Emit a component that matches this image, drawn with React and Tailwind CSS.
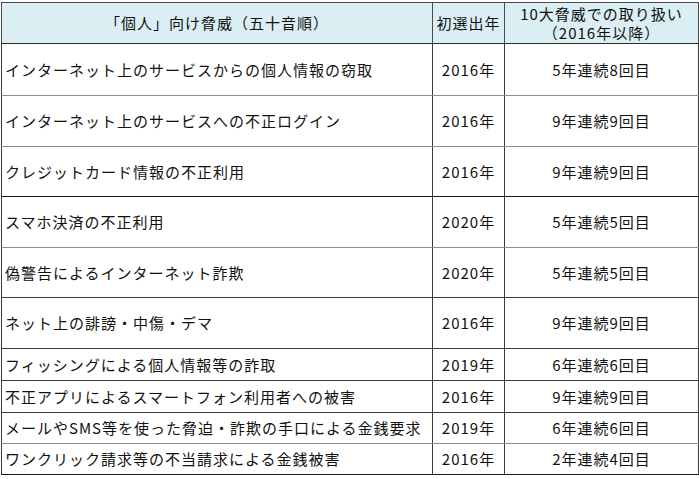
import React from 'react';

const rows = [
  { name: 'インターネット上のサービスからの個人情報の窃取', year: '2016年', note: '5年連続8回目', h: 'h-[52px]', line: 'border-b-[#8c8c8c]' },
  { name: 'インターネット上のサービスへの不正ログイン', year: '2016年', note: '9年連続9回目', h: 'h-[51px]', line: 'border-b-[#8c8c8c]' },
  { name: 'クレジットカード情報の不正利用', year: '2016年', note: '9年連続9回目', h: 'h-[50px]', line: 'border-b-[#1a1a1a]' },
  { name: 'スマホ決済の不正利用', year: '2020年', note: '5年連続5回目', h: 'h-[51px]', line: 'border-b-[#8c8c8c]' },
  { name: '偽警告によるインターネット詐欺', year: '2020年', note: '5年連続5回目', h: 'h-[50px]', line: 'border-b-[#3a3a3a]' },
  { name: 'ネット上の誹謗・中傷・デマ', year: '2016年', note: '9年連続9回目', h: 'h-[51px]', line: 'border-b-[#3a3a3a]' },
  { name: 'フィッシングによる個人情報等の詐取', year: '2019年', note: '6年連続6回目', h: 'h-[32px]', line: 'border-b-[#3a3a3a]' },
  { name: '不正アプリによるスマートフォン利用者への被害', year: '2016年', note: '9年連続9回目', h: 'h-[32px]', line: 'border-b-[#3a3a3a]' },
  { name: 'メールやSMS等を使った脅迫・詐欺の手口による金銭要求', year: '2019年', note: '6年連続6回目', h: 'h-[31px]', line: 'border-b-[#8c8c8c]' },
  { name: 'ワンクリック請求等の不当請求による金銭被害', year: '2016年', note: '2年連続4回目', h: 'h-[31px]', line: 'border-b-[#1a1a1a]' },
];

export default function App() {
  return (
    <div className="w-[699px] h-[479px] bg-white pt-[2px] pl-[1px] text-[#111] text-[15px] leading-[20px] tracking-[1px] font-['Noto_Sans_CJK_JP','Noto_Sans',sans-serif]">
      <table className="border-collapse table-fixed w-[697px]">
        <colgroup>
          <col className="w-[431px]" />
          <col className="w-[72px]" />
          <col className="w-[194px]" />
        </colgroup>
        <thead>
          <tr className="h-[41px] bg-[#daeef3]">
            <th className="font-normal border border-[#4a4a4a] border-b-[#2a2a2a] text-center p-0">「個人」向け脅威（五十音順）</th>
            <th className="font-normal border border-[#4a4a4a] border-b-[#2a2a2a] text-center p-0">初選出年</th>
            <th className="font-normal border border-[#4a4a4a] border-b-[#2a2a2a] text-center p-0 leading-[19px]">
              10大脅威での取り扱い
              <br />
              （2016年以降）
            </th>
          </tr>
        </thead>
        <tbody>
          {rows.map((r) => (
            <tr key={r.name} className={r.h}>
              <td className={`border border-x-[#3a3a3a] ${r.line} pl-[3px] pr-0 py-0 whitespace-nowrap`}>{r.name}</td>
              <td className={`border border-x-[#3a3a3a] ${r.line} text-center p-0`}>{r.year}</td>
              <td className={`border border-x-[#3a3a3a] ${r.line} text-center p-0`}>{r.note}</td>
            </tr>
          ))}
        </tbody>
      </table>
    </div>
  );
}
